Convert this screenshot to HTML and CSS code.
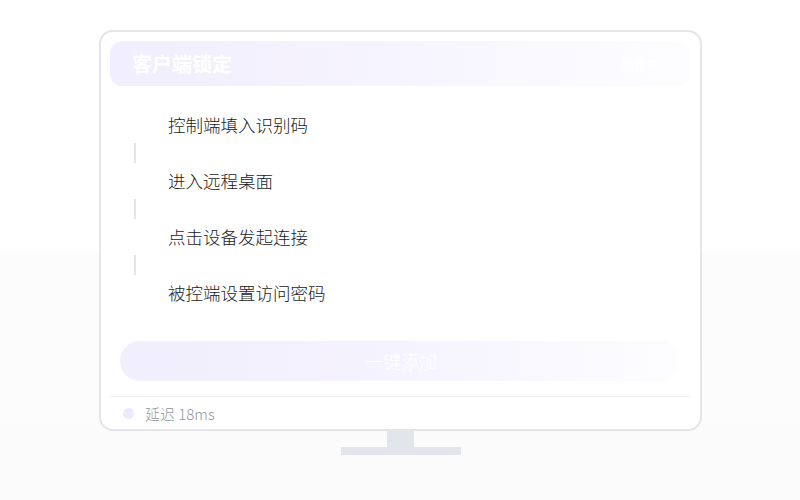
FILE: index.html
```html
<!DOCTYPE html>
<html lang="zh-CN">
<head>
<meta charset="utf-8">
<title>客户端锁定</title>
<link rel="stylesheet" href="styles.css">
</head>
<body>
<div class="scene">
  <div class="monitor">
    <div class="header">
      <span class="title">客户端锁定</span>
      <span class="header-extra">锁定中</span>
    </div>
    <div class="steps">
      <div class="step"><span class="marker"></span><span class="label">控制端填入识别码</span></div>
      <div class="connector"></div>
      <div class="step"><span class="marker"></span><span class="label">进入远程桌面</span></div>
      <div class="connector"></div>
      <div class="step"><span class="marker"></span><span class="label">点击设备发起连接</span></div>
      <div class="connector"></div>
      <div class="step"><span class="marker"></span><span class="label">被控端设置访问密码</span></div>
    </div>
    <div class="action">一键添加</div>
    <div class="footer">
      <span class="dot"></span>
      <span class="latency">延迟 18ms</span>
    </div>
  </div>
  <div class="neck"></div>
  <div class="base"></div>
</div>
</body>
</html>
```

FILE: styles.css
```css
* { box-sizing: border-box; }
html, body { margin: 0; padding: 0; }
body {
  width: 800px;
  height: 500px;
  overflow: hidden;
  font-family: "Noto Sans CJK SC", "Noto Sans", sans-serif;
  background: linear-gradient(to bottom, #ffffff 0, #ffffff 250px, #fcfcfd 252px, #fbfbfc 100%);
}
.scene {
  display: flex;
  flex-direction: column;
  align-items: center;
  padding-top: 30px;
  padding-left: 1px;
}
.monitor {
  width: 603px;
  height: 401px;
  border: 2px solid #e3e5e9;
  border-radius: 14px;
  background: #ffffff;
  padding: 9px 10px 0 9px;
  display: flex;
  flex-direction: column;
}
.header {
  height: 45px;
  border-radius: 12px;
  background: linear-gradient(to right, #f1eefd 0%, #f6f4fe 50%, #fdfdff 100%);
  display: flex;
  align-items: center;
  justify-content: space-between;
  padding: 0 14px 0 22px;
}
.title {
  color: #ffffff;
  font-size: 20px;
  font-weight: 700;
  line-height: 1;
}
.header-extra {
  color: #ffffff;
  font-size: 13px;
  margin-right: 16px;
}
.steps {
  margin-top: 21px;
  display: flex;
  flex-direction: column;
}
.step {
  height: 36px;
  display: flex;
  align-items: center;
}
.marker {
  width: 50px;
  height: 36px;
  flex: none;
}
.label {
  margin-left: 8px;
  font-size: 17.5px;
  font-weight: 300;
  color: #1a1a1a;
  line-height: 1;
}
.connector {
  width: 2px;
  height: 20px;
  margin-left: 24px;
  background: #e3e5e9;
}
.action {
  margin: 30px 10px 0 10px;
  height: 40px;
  border-radius: 20px;
  background: linear-gradient(to right, #f1eefd 0%, #f5f3fe 50%, #fdfdff 100%);
  color: #ffffff;
  font-size: 18px;
  font-weight: 300;
  display: flex;
  align-items: center;
  justify-content: center;
  padding-left: 2px;
}
.footer {
  margin-top: 15px;
  border-top: 1px solid #eceef1;
  height: 33px;
  display: flex;
  align-items: center;
  padding-left: 13px;
}
.dot {
  width: 11px;
  height: 11px;
  border-radius: 50%;
  background: #ece9fc;
  flex: none;
}
.latency {
  margin-left: 11px;
  font-size: 15px;
  font-weight: 300;
  color: #8f959d;
  line-height: 1;
}
.neck {
  width: 27px;
  height: 16px;
  background: #e2e5e9;
}
.base {
  width: 120px;
  height: 8px;
  background: #e2e5e9;
}
```
